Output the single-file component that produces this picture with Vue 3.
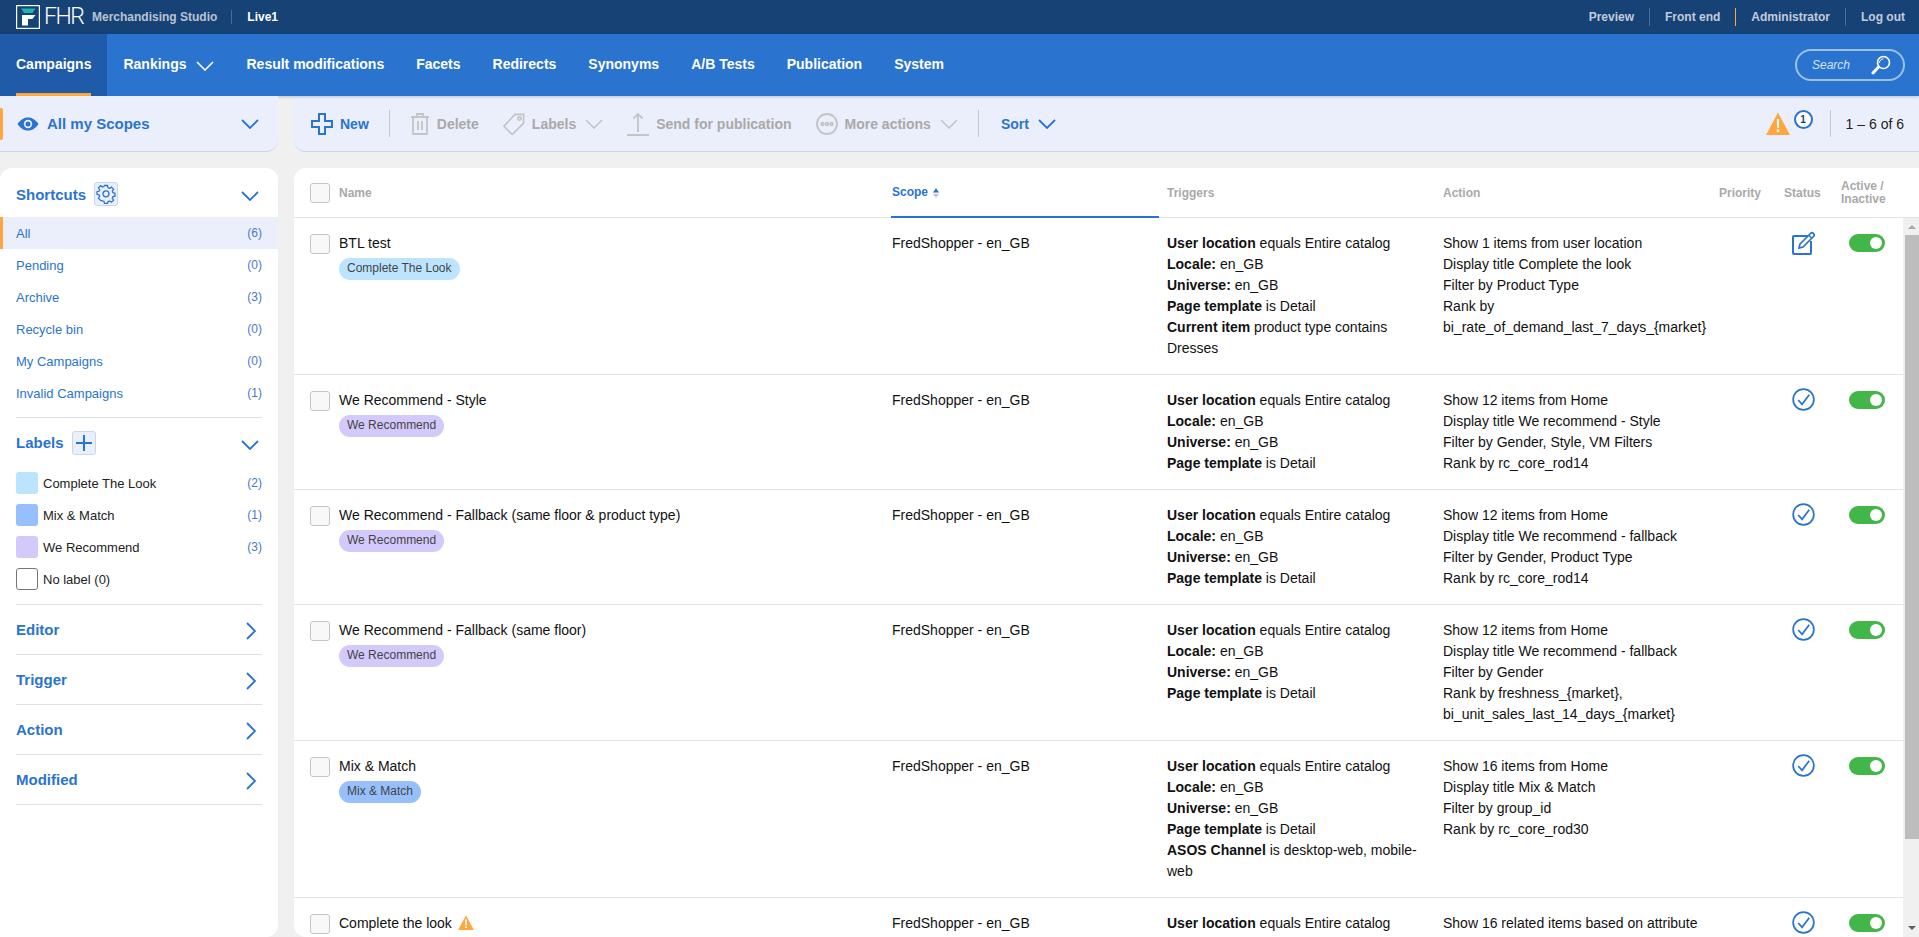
<template>
  <div class="page">
    <header class="topbar">
      <div class="brand">
        <svg class="logo" viewBox="0 0 24 24" width="24" height="24">
          <rect x="0.6" y="0.6" width="22.8" height="22.8" fill="none" stroke="#fff" stroke-width="1.2" />
          <path d="M5 3.500H19.500L16.500 8H8z" fill="#1fb5ad" />
          <path d="M6 10h13.500l-3 4H12v6.500H6z" fill="#fff" />
        </svg>
        <span class="brand-name">FHR</span>
        <span class="brand-app">Merchandising Studio</span>
        <span class="brand-env">Live1</span>
      </div>
      <nav class="toplinks">
        <a>Preview</a>
        <a>Front end</a>
        <a class="orange">Administrator</a>
        <a>Log out</a>
      </nav>
    </header>

    <nav class="mainnav">
      <a v-for="item in navItems" :key="item.name" class="nav-item" :class="{ active: item.active }">
        {{ item.name }}
        <svg v-if="item.menu" class="nav-chev" viewBox="0 0 18 10" width="18" height="10">
          <path d="M1 1l8 8 8-8" fill="none" stroke="#fff" stroke-width="1.6" />
        </svg>
      </a>
      <div class="search">
        <span>Search</span>
        <svg viewBox="0 0 20 20" width="20" height="20">
          <circle cx="12.5" cy="7.5" r="6" fill="none" stroke="#fff" stroke-width="1.6" />
          <path d="M8.5 8a4 4 0 0 1 4-4.200" fill="none" stroke="#fff" stroke-width="1" />
          <path d="M7.500 12L2 18" stroke="#fff" stroke-width="3" stroke-linecap="round" />
        </svg>
      </div>
    </nav>

    <div class="workspace">
      <section class="scope-panel">
        <span class="scope-mark"></span>
        <svg viewBox="0 0 22 14" width="22" height="14">
          <path d="M0.500 7C4 2 7.500 0.500 11 0.500S18 2 21.500 7C18 12 14.500 13.500 11 13.500S4 12 0.500 7z" fill="#2a74cf" />
          <circle cx="11" cy="7" r="4.200" fill="#ebeffb" />
          <circle cx="11" cy="7" r="2.500" fill="#2a74cf" />
        </svg>
        <span class="scope-title">All my Scopes</span>
        <svg class="chev-down" viewBox="0 0 18 10" width="18" height="10"><path d="M1 1l8 8 8-8" /></svg>
      </section>

      <section class="toolbar">
        <button type="button" class="tool primary">
          <svg viewBox="0 0 22 22" width="22" height="22">
            <path d="M8 1h6v7h7v6h-7v7H8v-7H1V8h7z" fill="none" stroke="#2a74cf" stroke-width="2" />
          </svg>
          New
        </button>
        <span class="tool-sep"></span>
        <button type="button" class="tool">
          <svg viewBox="0 0 20 22" width="20" height="22" class="grey-icon">
            <path d="M1 4h18M7 4V1h6v3M3 4v17h14V4M8 8v9M12 8v9" />
          </svg>
          Delete
        </button>
        <button type="button" class="tool">
          <svg viewBox="0 0 24 24" width="22" height="22" class="grey-icon">
            <path d="M13 1.500h9.500V11L10 23.500 1 14.500z" />
            <circle cx="18" cy="6" r="1.800" />
          </svg>
          Labels
          <svg class="chev-grey" viewBox="0 0 18 10" width="18" height="10"><path d="M1 1l8 8 8-8" /></svg>
        </button>
        <button type="button" class="tool">
          <svg viewBox="0 0 22 24" width="22" height="24" class="grey-icon">
            <path d="M11 20V2M6.500 6.500L11 2l4.500 4.500M0 23h22" />
          </svg>
          Send for publication
        </button>
        <button type="button" class="tool">
          <svg viewBox="0 0 22 22" width="22" height="22" class="grey-icon">
            <circle cx="11" cy="11" r="10" />
            <circle cx="6.500" cy="11" r="1.300" />
            <circle cx="11" cy="11" r="1.300" />
            <circle cx="15.500" cy="11" r="1.300" />
          </svg>
          More actions
          <svg class="chev-grey" viewBox="0 0 18 10" width="18" height="10"><path d="M1 1l8 8 8-8" /></svg>
        </button>
        <span class="tool-sep sort-sep"></span>
        <button type="button" class="tool primary">
          Sort
          <svg class="chev-down" viewBox="0 0 18 10" width="18" height="10"><path d="M1 1l8 8 8-8" /></svg>
        </button>
        <div class="tool-right">
          <svg viewBox="0 0 24 23" width="24" height="23">
            <path d="M12 0.500L24 23H0z" fill="#ffa63e" />
            <path d="M10.800 7h2.400l-0.400 9h-1.600zM10.800 17.500h2.400v2.500h-2.400z" fill="#fff" />
          </svg>
          <span class="info-count">1</span>
          <span class="tool-sep pager-sep"></span>
          <span class="pager">1 – 6 of 6</span>
        </div>
      </section>

      <aside class="sidebar">
        <div class="side-head first">
          <span class="side-title">Shortcuts</span>
          <span class="head-btn">
            <svg viewBox="0 0 20 20" width="20" height="20">
              <path
                d="M8.300 1h3.400l.5 2.500 1.700.7 2.100-1.400 2.400 2.400-1.400 2.100.7 1.700 2.300.5v3.400l-2.300.5-.7 1.700 1.400 2.100-2.400 2.400-2.100-1.400-1.700.7-.5 2.100H8.300l-.5-2.300-1.700-.7L4 17.500l-2.400-2.400L3 13l-.7-1.700L0 10.800V7.900l2.300-.5L3 5.700 1.600 3.600 4 1.200l2.100 1.400 1.700-.7z"
                transform="translate(1 0.600) scale(0.9)"
                fill="none"
                stroke="#2a74cf"
                stroke-width="1.400"
              />
              <circle cx="10" cy="9.800" r="3" fill="none" stroke="#2a74cf" stroke-width="1.300" />
            </svg>
          </span>
          <svg class="chev-down side-chev" viewBox="0 0 18 10" width="18" height="10"><path d="M1 1l8 8 8-8" /></svg>
        </div>
        <ul class="shortcuts">
          <li v-for="s in shortcuts" :key="s.name" :class="{ selected: s.selected }">
            <span>{{ s.name }}</span>
            <span class="count">({{ s.count }})</span>
          </li>
        </ul>
        <div class="side-rule"></div>

        <div class="side-head">
          <span class="side-title">Labels</span>
          <span class="head-btn">
            <svg viewBox="0 0 18 18" width="18" height="18"><path d="M9 1v16M1 9h16" stroke="#2a74cf" stroke-width="2" /></svg>
          </span>
          <svg class="chev-down side-chev" viewBox="0 0 18 10" width="18" height="10"><path d="M1 1l8 8 8-8" /></svg>
        </div>
        <ul class="labels">
          <li v-for="l in labels" :key="l.name">
            <span class="swatch" :style="{ background: l.color }"></span>
            <span class="label-name">{{ l.name }}</span>
            <span class="count">({{ l.count }})</span>
          </li>
          <li>
            <span class="swatch empty"></span>
            <span class="label-name">No label (0)</span>
          </li>
        </ul>
        <div class="side-rule labels-rule"></div>

        <div v-for="name in filters" :key="name" class="side-section">
          <span class="side-title">{{ name }}</span>
          <svg class="chev-right" viewBox="0 0 10 18" width="10" height="18"><path d="M1 1l8 8-8 8" /></svg>
        </div>
      </aside>

      <main class="table-card">
        <div class="table-row table-head">
          <div class="cell-check"><span class="checkbox"></span></div>
          <div class="th">Name</div>
          <div class="th sorted">
            Scope
            <svg viewBox="0 0 6 12" width="6" height="12">
              <path d="M3 1l3 4.500H0z" fill="#2a74cf" />
              <path d="M3 11L0 6.800h6z" fill="#c4c4c4" />
            </svg>
          </div>
          <div class="th pad">Triggers</div>
          <div class="th pad">Action</div>
          <div class="th pad">Priority</div>
          <div class="th pad">Status</div>
          <div class="th pad">Active /<br />Inactive</div>
        </div>

        <div class="table-body">
          <div class="rows">
            <div v-for="c in campaigns" :key="c.name" class="table-row campaign">
              <div class="cell-check"><span class="checkbox"></span></div>
              <div class="cell name">
                <div>
                  {{ c.name }}
                  <svg v-if="c.warning" class="name-warn" viewBox="0 0 24 23" width="16" height="15">
                    <path d="M12 0.500L24 23H0z" fill="#ffa63e" />
                    <path d="M10.500 7h3l-0.500 9h-2zM10.500 17.500h3v2.500h-3z" fill="#fff" />
                  </svg>
                </div>
                <span v-if="c.tag" class="tag" :style="{ background: tagColors[c.tag] }">{{ c.tag }}</span>
              </div>
              <div class="cell scope">FredShopper - en_GB</div>
              <div class="cell pad">
                <div v-for="t in c.triggers" :key="t.b"><b>{{ t.b }}</b> {{ t.t }}</div>
              </div>
              <div class="cell pad action-cell">
                <div v-for="a in c.actions" :key="a">{{ a }}</div>
              </div>
              <div class="cell pad"></div>
              <div class="cell status">
                <svg v-if="c.draft" viewBox="0 0 24 24" width="24" height="24">
                  <path d="M16 5H2a1 1 0 0 0-1 1v16a1 1 0 0 0 1 1h16a1 1 0 0 0 1-1V10" fill="none" stroke="#2a74cf" stroke-width="2" />
                  <path d="M8 13L18.500 2.500a1.800 1.800 0 0 1 3 3L11 16l-4 1z" fill="none" stroke="#2a74cf" stroke-width="1.700" />
                  <path d="M17 4.500l2.500 2.500" stroke="#2a74cf" stroke-width="1.500" />
                </svg>
                <svg v-else viewBox="0 0 24 24" width="23" height="23">
                  <circle cx="12" cy="12" r="10.800" fill="none" stroke="#2a74cf" stroke-width="1.800" />
                  <path d="M6.500 12.500l4 4.500 7.500-10" fill="none" stroke="#2a74cf" stroke-width="1.800" />
                </svg>
              </div>
              <div class="cell toggle-cell"><span class="toggle"><i></i></span></div>
            </div>
          </div>
          <div class="scrollbar">
            <span class="arrow up"></span>
            <span class="thumb"></span>
            <span class="arrow down"></span>
          </div>
        </div>
      </main>
    </div>
  </div>
</template>

<script setup>
const navItems = [
  { name: 'Campaigns', active: true },
  { name: 'Rankings', menu: true },
  { name: 'Result modifications' },
  { name: 'Facets' },
  { name: 'Redirects' },
  { name: 'Synonyms' },
  { name: 'A/B Tests' },
  { name: 'Publication' },
  { name: 'System' },
]

const shortcuts = [
  { name: 'All', count: 6, selected: true },
  { name: 'Pending', count: 0 },
  { name: 'Archive', count: 3 },
  { name: 'Recycle bin', count: 0 },
  { name: 'My Campaigns', count: 0 },
  { name: 'Invalid Campaigns', count: 1 },
]

const tagColors = {
  'Complete The Look': '#bde4ff',
  'Mix & Match': '#97bffb',
  'We Recommend': '#d3c9fb',
}

const labels = [
  { name: 'Complete The Look', count: 2, color: tagColors['Complete The Look'] },
  { name: 'Mix & Match', count: 1, color: tagColors['Mix & Match'] },
  { name: 'We Recommend', count: 3, color: tagColors['We Recommend'] },
]

const filters = ['Editor', 'Trigger', 'Action', 'Modified']

const baseTriggers = [
  { b: 'User location', t: 'equals Entire catalog' },
  { b: 'Locale:', t: 'en_GB' },
  { b: 'Universe:', t: 'en_GB' },
  { b: 'Page template', t: 'is Detail' },
]

const campaigns = [
  {
    name: 'BTL test',
    tag: 'Complete The Look',
    draft: true,
    triggers: [...baseTriggers, { b: 'Current item', t: 'product type contains Dresses' }],
    actions: [
      'Show 1 items from user location',
      'Display title Complete the look',
      'Filter by Product Type',
      'Rank by bi_rate_of_demand_last_7_days_{market}',
    ],
  },
  {
    name: 'We Recommend - Style',
    tag: 'We Recommend',
    triggers: baseTriggers,
    actions: [
      'Show 12 items from Home',
      'Display title We recommend - Style',
      'Filter by Gender, Style, VM Filters',
      'Rank by rc_core_rod14',
    ],
  },
  {
    name: 'We Recommend - Fallback (same floor & product type)',
    tag: 'We Recommend',
    triggers: baseTriggers,
    actions: [
      'Show 12 items from Home',
      'Display title We recommend - fallback',
      'Filter by Gender, Product Type',
      'Rank by rc_core_rod14',
    ],
  },
  {
    name: 'We Recommend - Fallback (same floor)',
    tag: 'We Recommend',
    triggers: baseTriggers,
    actions: [
      'Show 12 items from Home',
      'Display title We recommend - fallback',
      'Filter by Gender',
      'Rank by freshness_{market}, bi_unit_sales_last_14_days_{market}',
    ],
  },
  {
    name: 'Mix & Match',
    tag: 'Mix & Match',
    triggers: [...baseTriggers, { b: 'ASOS Channel', t: 'is desktop-web, mobile-web' }],
    actions: [
      'Show 16 items from Home',
      'Display title Mix & Match',
      'Filter by group_id',
      'Rank by rc_core_rod30',
    ],
  },
  {
    name: 'Complete the look',
    warning: true,
    triggers: baseTriggers.slice(0, 1),
    actions: ['Show 16 related items based on attribute'],
  },
]
</script>

<style>
html,
body {
  margin: 0;
  background: #f0f0f0;
}
</style>

<style scoped>
.page {
  height: 100vh;
  display: flex;
  flex-direction: column;
  overflow: hidden;
  font-family: 'Liberation Sans', Arial, sans-serif;
  font-size: 14px;
  color: #111;
  background: #f0f0f0;
}

.topbar {
  height: 34px;
  flex-shrink: 0;
  display: flex;
  align-items: center;
  justify-content: space-between;
  padding: 0 14px 0 16px;
  background: #164276;
}

.brand {
  display: flex;
  align-items: center;
}

.logo {
  display: block;
}

.brand-name {
  margin-left: 4px;
  width: 48px;
  font-family: Roboto, sans-serif;
  font-weight: 300;
  font-size: 23px;
  letter-spacing: -1.500px;
  line-height: 24px;
  color: #fff;
}

.brand-app {
  font-size: 12px;
  font-weight: bold;
  color: #b9c4d3;
  padding-right: 14px;
  border-right: 1px solid #4a6c96;
}

.brand-env {
  margin-left: 15px;
  font-size: 12px;
  font-weight: bold;
  color: #fff;
}

.toplinks {
  display: flex;
  align-items: center;
  font-size: 12px;
  font-weight: bold;
  color: #c2ccd9;
}

.toplinks a {
  padding: 0 15px;
  line-height: 18px;
  border-left: 1px solid #4a6c96;
}

.toplinks a:first-child {
  border-left: 0;
}

.toplinks a:last-child {
  padding-right: 0;
}

.toplinks a.orange {
  border-left-color: #ffa63e;
}

.mainnav {
  height: 62px;
  flex-shrink: 0;
  display: flex;
  align-items: stretch;
  padding-right: 14px;
  background: #2a74cf;
  position: relative;
  box-shadow: 0 1px 3px rgba(0, 0, 0, 0.2);
}

.nav-item {
  display: flex;
  align-items: center;
  gap: 10px;
  padding: 0 16px 2px;
  font-weight: bold;
  font-size: 14px;
  color: #fff;
}

.nav-item.active {
  background: #1f5ba8;
  background-image: linear-gradient(#ffa63e, #ffa63e);
  background-repeat: no-repeat;
  background-size: calc(100% - 32px) 3px;
  background-position: center bottom;
}

.nav-chev {
  display: block;
  margin-top: 3px;
}

.search {
  margin: auto 0 auto auto;
  width: 110px;
  height: 32px;
  box-sizing: border-box;
  display: flex;
  align-items: center;
  justify-content: space-between;
  padding: 0 12px 0 15px;
  border: 2px solid #9cc0ea;
  border-radius: 16px;
  font-size: 12px;
  font-style: italic;
  color: #d4e3f6;
}

.workspace {
  flex: 1;
  min-height: 0;
  display: grid;
  grid-template-columns: 278px 1fr;
  grid-template-rows: 56px 1fr;
  column-gap: 16px;
  row-gap: 16px;
}

.scope-panel,
.toolbar {
  display: flex;
  align-items: center;
  background: #ebeffb;
  border-bottom: 1px solid #c9d6ee;
  box-sizing: border-box;
}

.scope-panel {
  padding-left: 17px;
  padding-right: 19px;
  gap: 8px;
  border-bottom-right-radius: 12px;
  position: relative;
}

.scope-mark {
  position: absolute;
  left: 0;
  top: 12px;
  width: 3px;
  height: 32px;
  background: #ffa63e;
  border-radius: 0 2px 2px 0;
}

.scope-title {
  flex: 1;
  font-weight: bold;
  font-size: 15px;
  color: #2a74cf;
}

.chev-down {
  display: block;
  flex-shrink: 0;
}

.chev-down path,
.chev-right path {
  fill: none;
  stroke: #2a74cf;
  stroke-width: 1.800;
}

.chev-grey {
  display: block;
  margin-left: 2px;
}

.chev-grey path {
  fill: none;
  stroke: #c4c4c4;
  stroke-width: 1.600;
}

.toolbar {
  padding: 0 15px 0 17px;
  border-bottom-left-radius: 12px;
}

.tool {
  display: flex;
  align-items: center;
  gap: 7px;
  margin-right: 24px;
  padding: 0;
  border: 0;
  background: none;
  font-family: inherit;
  font-size: 14px;
  font-weight: bold;
  color: #a9a9a9;
}

.tool.primary {
  color: #2a74cf;
  margin-right: 0;
}

.tool.primary .chev-down {
  margin-left: 2px;
}

.grey-icon {
  display: block;
  fill: none;
  stroke: #c4c4c4;
  stroke-width: 1.800;
}

.tool-sep {
  width: 1px;
  height: 27px;
  margin: 0 20px;
  background: #c4c8d0;
}

.sort-sep {
  margin-left: -4px;
  margin-right: 22px;
}

.tool-right {
  margin-left: auto;
  display: flex;
  align-items: center;
}

.info-count {
  width: 19px;
  height: 19px;
  box-sizing: border-box;
  margin: -8px 0 0 4px;
  display: flex;
  align-items: center;
  justify-content: center;
  border: 2px solid #2a74cf;
  border-radius: 50%;
  background: #fff;
  font-size: 10px;
  font-weight: bold;
  color: #1b3f70;
}

.pager-sep {
  margin: 0 15px 0 17px;
}

.pager {
  color: #222;
}

.sidebar {
  background: #fff;
  border-radius: 12px 12px 12px 0;
  overflow: hidden;
  padding: 0 16px;
}

.side-head {
  height: 49px;
  box-sizing: border-box;
  display: flex;
  align-items: center;
}

.side-head.first {
  padding-top: 3px;
}

.side-title {
  font-size: 15px;
  font-weight: bold;
  color: #2a74cf;
}

.head-btn {
  margin-left: 8px;
  width: 24px;
  height: 24px;
  box-sizing: border-box;
  display: flex;
  align-items: center;
  justify-content: center;
  background: #ebeffb;
  border: 1px solid #c9d6ee;
  border-radius: 3px;
}

.side-chev {
  margin-left: auto;
  margin-right: 3px;
  margin-top: 4px;
}

.shortcuts,
.labels {
  list-style: none;
  margin: 0;
  padding: 0;
}

.shortcuts li,
.labels li {
  height: 32px;
  display: flex;
  align-items: center;
  font-size: 13px;
}

.shortcuts li {
  margin: 0 -16px;
  padding: 0 16px;
  justify-content: space-between;
  color: #2a74cf;
}

.shortcuts li.selected {
  background: #ebeffb;
  box-shadow: inset 3px 0 0 #ffa63e;
}

.count {
  font-size: 12px;
  color: #4a78c8;
}

.side-rule {
  height: 1px;
  margin-top: 8px;
  background: #dcdfe4;
}

.side-rule.labels-rule {
  margin-top: 9px;
}

.swatch {
  width: 22px;
  height: 22px;
  box-sizing: border-box;
  border-radius: 3px;
  margin-right: 5px;
}

.swatch.empty {
  border: 1px solid #777;
  background: #fff;
}

.label-name {
  flex: 1;
  color: #222;
}

.side-section {
  height: 50px;
  box-sizing: border-box;
  display: flex;
  align-items: center;
  justify-content: space-between;
  padding-right: 6px;
  border-bottom: 1px solid #dcdfe4;
}

.chev-right {
  display: block;
  margin-top: 3px;
}

.table-card {
  min-width: 0;
  min-height: 0;
  display: flex;
  flex-direction: column;
  background: #fff;
  border-radius: 12px 0 0 12px;
  overflow: hidden;
}

.table-row {
  display: grid;
  grid-template-columns: 45px 552px 268px 276px 276px 65px 57px 1fr;
}

.table-head {
  height: 50px;
  flex-shrink: 0;
  box-sizing: border-box;
  align-items: stretch;
  border-bottom: 1px solid #e2e4e8;
}

.th {
  display: flex;
  align-items: center;
  gap: 5px;
  padding-top: 1px;
  font-size: 12px;
  line-height: 13px;
  font-weight: bold;
  color: #a9a9a9;
}

.th.pad {
  padding-left: 8px;
  display: block;
  align-self: center;
}

.th.sorted {
  color: #2a74cf;
  padding-left: 1px;
  margin-bottom: -1px;
  border-bottom: 2px solid #2a74cf;
}

.cell-check {
  padding: 16px 0 0 16px;
}

.table-head .cell-check {
  padding-top: 15px;
}

.checkbox {
  display: block;
  width: 20px;
  height: 20px;
  box-sizing: border-box;
  background: #f8f8f8;
  border: 1px solid #c4c4c4;
  border-radius: 3px;
}

.table-body {
  flex: 1;
  min-height: 0;
  display: flex;
}

.rows {
  flex: 1;
  min-width: 0;
  overflow: hidden;
}

.campaign {
  border-bottom: 1px solid #e2e4e8;
  line-height: 21px;
  color: #111;
}

.cell {
  padding: 15px 0;
  min-width: 0;
}

.cell.scope {
  padding-left: 1px;
}

.cell.pad {
  padding-left: 8px;
  padding-right: 8px;
}

.cell.action-cell {
  padding-right: 0;
  overflow-wrap: anywhere;
}

.name-warn {
  vertical-align: -2px;
  margin-left: 2px;
}

.tag {
  display: block;
  width: fit-content;
  height: 22px;
  margin-top: 4px;
  padding: 0 8px;
  border-radius: 11px;
  font-size: 12px;
  line-height: 20px;
  color: #444;
}

.status {
  padding-top: 13px;
  padding-left: 16px;
}

.status svg {
  display: block;
}

.toggle-cell {
  padding: 16px 0 0 16px;
}

.toggle {
  display: flex;
  justify-content: flex-end;
  align-items: center;
  width: 36px;
  height: 18px;
  box-sizing: border-box;
  padding-right: 3px;
  border-radius: 9px;
  background: #43b649;
}

.toggle i {
  display: block;
  width: 12px;
  height: 12px;
  border-radius: 50%;
  background: #fff;
}

.scrollbar {
  width: 16px;
  flex-shrink: 0;
  display: flex;
  flex-direction: column;
  align-items: flex-end;
  background: #f0f0f0;
}

.thumb {
  width: 14px;
  height: 604px;
  background: #bdbdbd;
}

.arrow {
  width: 14px;
  height: 17px;
  display: flex;
  align-items: center;
  justify-content: center;
}

.arrow::before {
  content: '';
  border-left: 4px solid transparent;
  border-right: 4px solid transparent;
}

.arrow.up::before {
  border-bottom: 4px solid #a8a8a8;
}

.arrow.down {
  margin-top: auto;
  margin-bottom: 1px;
}

.arrow.down::before {
  border-top: 4px solid #606060;
}
</style>
